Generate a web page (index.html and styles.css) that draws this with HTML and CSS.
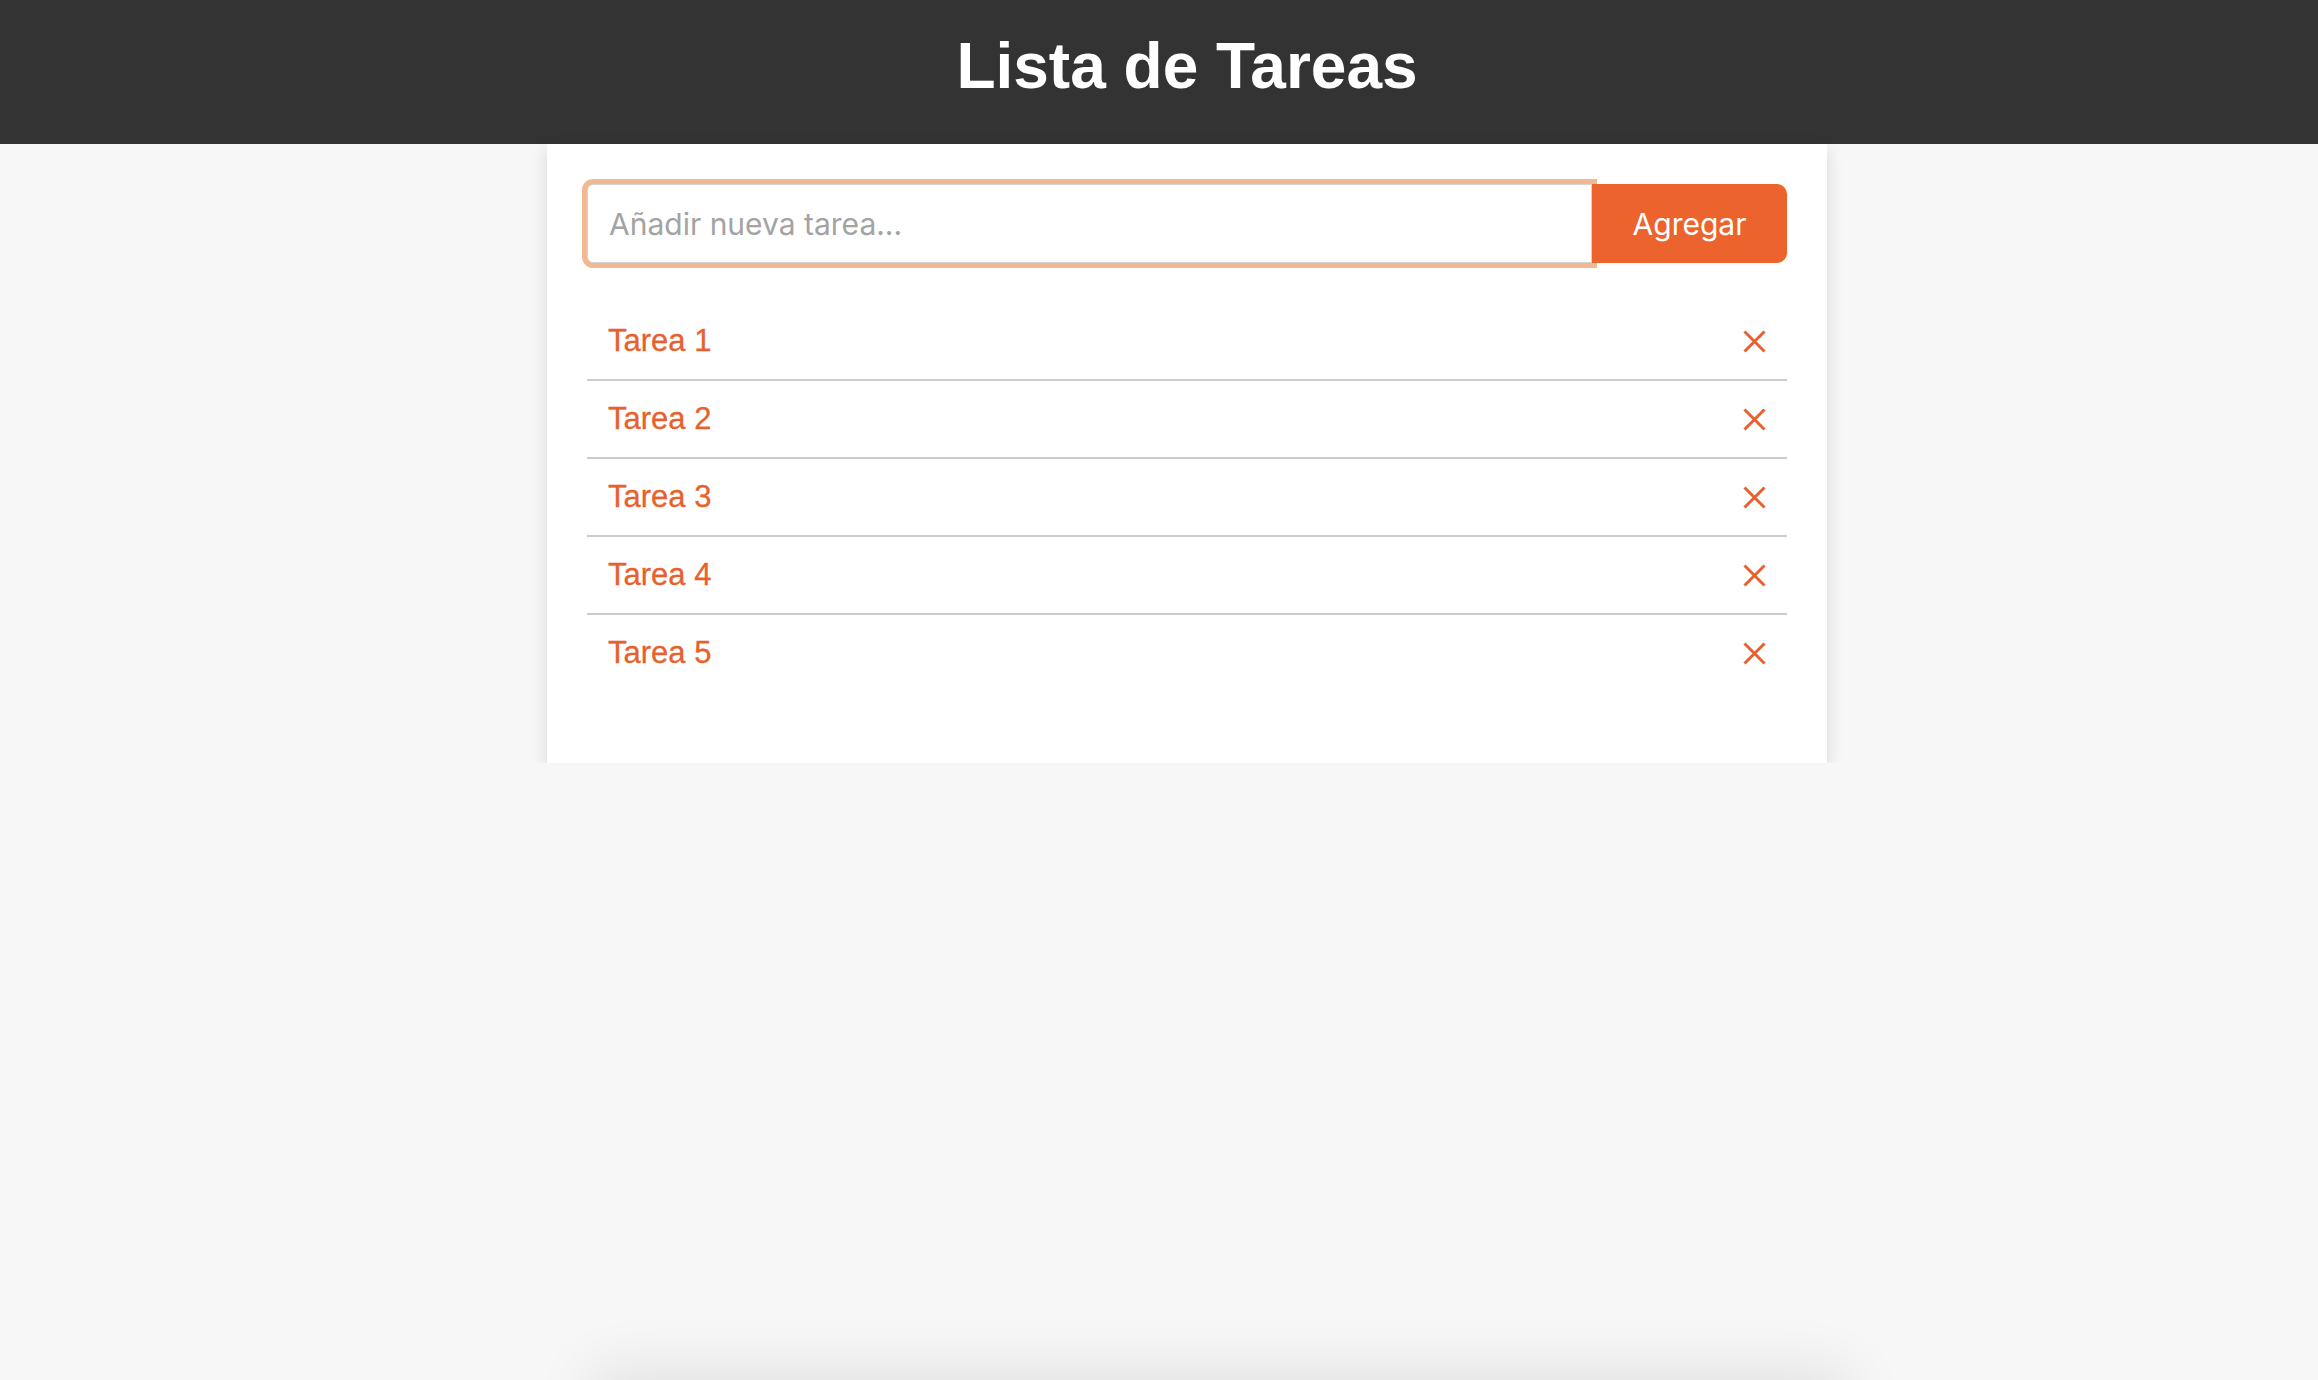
FILE: index.html
```html
<!DOCTYPE html>
<html lang="es">
<head>
<meta charset="utf-8">
<title>Lista de Tareas</title>
<link rel="stylesheet" href="styles.css">
</head>
<body>
<header class="topbar">
  <h1 class="title">Lista de Tareas</h1>
</header>
<main class="page">
  <section class="card">
    <form class="add-form">
      <input class="add-input" type="text" placeholder="Añadir nueva tarea...">
      <button class="add-btn" type="button">Agregar</button>
    </form>
    <ul class="tasks">
      <li class="task"><span class="task-text">Tarea 1</span><button class="del" type="button" aria-label="Eliminar"><svg viewBox="0 0 23 23" width="23" height="23"><path d="M1.5 1.5 L21.5 21.5 M21.5 1.5 L1.5 21.5"/></svg></button></li>
      <li class="task"><span class="task-text">Tarea 2</span><button class="del" type="button" aria-label="Eliminar"><svg viewBox="0 0 23 23" width="23" height="23"><path d="M1.5 1.5 L21.5 21.5 M21.5 1.5 L1.5 21.5"/></svg></button></li>
      <li class="task"><span class="task-text">Tarea 3</span><button class="del" type="button" aria-label="Eliminar"><svg viewBox="0 0 23 23" width="23" height="23"><path d="M1.5 1.5 L21.5 21.5 M21.5 1.5 L1.5 21.5"/></svg></button></li>
      <li class="task"><span class="task-text">Tarea 4</span><button class="del" type="button" aria-label="Eliminar"><svg viewBox="0 0 23 23" width="23" height="23"><path d="M1.5 1.5 L21.5 21.5 M21.5 1.5 L1.5 21.5"/></svg></button></li>
      <li class="task"><span class="task-text">Tarea 5</span><button class="del" type="button" aria-label="Eliminar"><svg viewBox="0 0 23 23" width="23" height="23"><path d="M1.5 1.5 L21.5 21.5 M21.5 1.5 L1.5 21.5"/></svg></button></li>
    </ul>
  </section>
</main>
<div class="bottom-shade"></div>
</body>
</html>
```

FILE: styles.css
```css
* { box-sizing: border-box; }

html, body {
  margin: 0;
  padding: 0;
  background: #f7f7f7;
  font-family: "Liberation Sans", Arial, sans-serif;
  overflow: hidden;
}

.topbar {
  height: 144px;
  background: #333333;
  padding: 34px 0 0 56px;
}

.title {
  margin: 0;
  color: #ffffff;
  font-family: "Liberation Sans", Arial, sans-serif;
  font-weight: 700;
  font-size: 64px;
  line-height: 1;
  text-align: center;
}

.page {
  padding-left: 56px;
}

.card {
  width: 1280px;
  margin: 0 auto;
  background: #ffffff;
  padding: 40px;
  box-shadow: 0 5px 16px rgba(0, 0, 0, 0.13);
}

.add-form {
  display: flex;
  margin: 0;
}

.add-input {
  flex: 1;
  height: 79px;
  margin: 0;
  padding: 0 21px;
  border: 1px solid #d4d4d4;
  border-radius: 6px 0 0 6px;
  box-shadow: 0 0 0 5px #f1b893;
  font-family: Inter, "Noto Sans", sans-serif;
  font-size: 30px;
  color: #333;
  background: #ffffff;
  outline: none;
}

.add-input::placeholder {
  color: #a3a3a3;
}

.add-btn {
  width: 195px;
  height: 79px;
  margin: 0;
  border: none;
  border-radius: 0 10px 10px 0;
  background: #ec632d;
  color: #ffffff;
  font-family: Inter, "Noto Sans", sans-serif;
  font-size: 30px;
  cursor: pointer;
  position: relative;
  z-index: 1;
}

.tasks {
  list-style: none;
  margin: 40px 0 32px 0;
  padding: 0;
}

.task {
  display: flex;
  align-items: center;
  justify-content: space-between;
  height: 78px;
  padding: 0 21px 0 21px;
  border-bottom: 2px solid #cbcbcb;
}

.task:last-child {
  border-bottom: none;
  height: 76px;
}

.task-text {
  color: #e8602c;
  font-family: "Liberation Sans", Arial, sans-serif;
  font-size: 31px;
  -webkit-text-stroke: 0.3px #e8602c;
}

.del {
  display: flex;
  padding: 0;
  margin: 0;
  border: none;
  background: none;
  cursor: pointer;
}

.del svg {
  display: block;
  fill: none;
  stroke: #e8602c;
  stroke-width: 3;
}

.bottom-shade {
  position: fixed;
  left: 600px;
  width: 1240px;
  bottom: -60px;
  height: 60px;
  box-shadow: 0 0 60px 10px rgba(0, 0, 0, 0.09);
  background: #ebebeb;
}
```
